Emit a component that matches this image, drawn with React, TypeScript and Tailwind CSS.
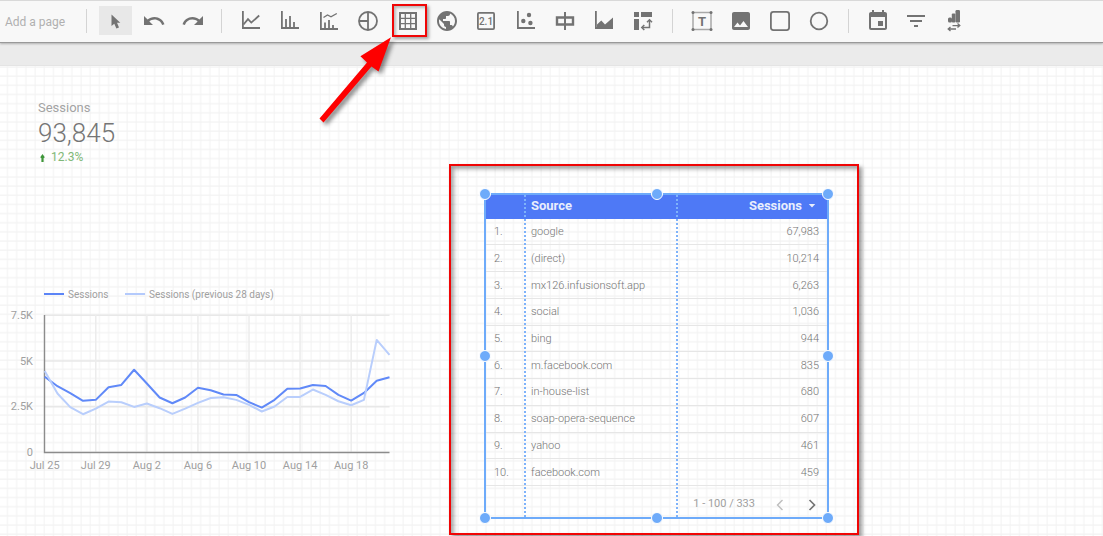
import type { ReactNode } from 'react';
import {
  MdEvent,
  MdFilterList,
  MdImage,
  MdPublic,
  MdRedo,
  MdUndo,
} from 'react-icons/md';

const AXIS = 'M3.9 2V19H21';

const ROWS = [
  { source: 'google', sessions: '67,983' },
  { source: '(direct)', sessions: '10,214' },
  { source: 'mx126.infusionsoft.app', sessions: '6,263' },
  { source: 'social', sessions: '1,036' },
  { source: 'bing', sessions: '944' },
  { source: 'm.facebook.com', sessions: '835' },
  { source: 'in-house-list', sessions: '680' },
  { source: 'soap-opera-sequence', sessions: '607' },
  { source: 'yahoo', sessions: '461' },
  { source: 'facebook.com', sessions: '459' },
];

const CURRENT = [
  4140, 3620, 3240, 2825, 2875, 3565, 3690, 4520, 3770, 3005, 2690, 3005, 3540,
  3400, 3170, 3145, 2750, 2455, 2875, 3485, 3495, 3690, 3635, 3145, 2835, 3255,
  3915, 4110,
];

const PREVIOUS = [
  4455, 3220, 2475, 2090, 2400, 2785, 2745, 2490, 2675, 2420, 2110, 2400, 2710,
  2980, 3020, 2875, 2600, 2240, 2510, 3035, 3035, 3440, 3145, 2800, 2580, 2875,
  6150, 5330,
];

const DAYS = ['Jul 25', 'Jul 29', 'Aug 2', 'Aug 6', 'Aug 10', 'Aug 14', 'Aug 18'];

interface IIcon {
  children: ReactNode;
}

function Icon({ children }: IIcon) {
  return (
    <svg
      viewBox="0 0 24 24"
      className="size-6 shrink-0"
      fill="none"
      stroke="currentColor"
      strokeWidth="1.8"
      aria-hidden="true"
    >
      {children}
    </svg>
  );
}

interface ITool {
  label: string;
  active?: boolean;
  children: ReactNode;
}

function Tool({ label, active = false, children }: ITool) {
  return (
    <button
      type="button"
      aria-label={label}
      className={`flex h-[29px] w-[33px] shrink-0 items-center justify-center text-[#737373] ${
        active ? 'bg-[#e8e8e8]' : ''
      }`}
    >
      {children}
    </button>
  );
}

function Divider() {
  return <div className="mx-3 h-6 w-px shrink-0 bg-[#d4d4d4]" />;
}

/* Red frame and arrow that point at the table tool */
function Callout() {
  return (
    <>
      <span className="pointer-events-none absolute -top-0.5 left-px h-[33px] w-[35px] border-2 border-[#f00505] shadow-[2px_2px_3px_rgba(0,0,0,0.35),inset_2px_2px_3px_rgba(0,0,0,0.25)]" />
      <svg
        viewBox="0 0 80 96"
        className="pointer-events-none absolute top-full right-full z-10 h-24 w-20 drop-shadow-[3px_3px_2px_rgba(0,0,0,0.45)]"
        aria-hidden="true"
      >
        <path
          d="M80 2.3L49.4 21.3L56 27.5L8.5 83.5L12.5 87.5L60.5 31.5L67.5 36.5Z"
          fill="#fe0000"
        />
      </svg>
    </>
  );
}

function Toolbar() {
  return (
    <header className="relative z-10 flex h-[43px] items-center border-t border-b border-t-[#d9d9d9] border-b-[#999] bg-[#f8f8f8] pb-0.5 shadow-[0_1px_2px_rgba(0,0,0,0.25)]">
      <button
        type="button"
        className="w-[74px] shrink-0 pt-0.5 pl-[5px] text-left text-xs whitespace-nowrap text-[#b0b0b0]"
      >
        Add a page
      </button>
      <Divider />

      <div className="flex w-[110px] shrink-0 justify-between">
        <Tool label="Select" active>
          <Icon>
            <path
              d="M7.5 5.5V17L10.3 14.8L12.4 19.5L15 18.4L13 13.8H16.3Z"
              fill="currentColor"
              stroke="none"
            />
          </Icon>
        </Tool>
        <Tool label="Undo">
          <MdUndo size={24} />
        </Tool>
        <Tool label="Redo">
          <MdRedo size={24} />
        </Tool>
      </div>
      <Divider />

      <div className="flex w-[426px] shrink-0 justify-between">
        <Tool label="Time series">
          <Icon>
            <path d={AXIS} />
            <path d="M4.5 15.5L9 10.2L12.3 13.6L20.2 6.5" />
          </Icon>
        </Tool>
        <Tool label="Bar chart">
          <Icon>
            <path d={AXIS} />
            <path d="M8 19V10M12 19V7M16 19V13" />
          </Icon>
        </Tool>
        <Tool label="Combo chart">
          <Icon>
            <path d="M3.9 3V20H21" />
            <path d="M8 20V13.5M12 20V11M16 20V16" />
            <path d="M6.5 8.5L10.5 6L14 7.8L19.8 4.5" strokeWidth="1.4" />
          </Icon>
        </Tool>
        <Tool label="Pie chart">
          <Icon>
            <circle cx="12" cy="12" r="9" />
            <path d="M12 3V21M3 12H12" />
          </Icon>
        </Tool>
        <div className="relative">
          <Tool label="Table">
            <Icon>
              <rect x="4" y="4" width="16" height="16" strokeWidth="2" />
              <path d="M9.3 4V20M14.7 4V20M4 9.3H20M4 14.7H20" strokeWidth="1.3" />
            </Icon>
          </Tool>
          <Callout />
        </div>
        <Tool label="Geo map">
          <MdPublic size={24} />
        </Tool>
        <Tool label="Scorecard">
          <Icon>
            <rect x="3.9" y="3.9" width="16.2" height="16.2" rx="1" />
            <text
              x="12"
              y="15.8"
              fontSize="10"
              fontWeight="500"
              textAnchor="middle"
              fill="currentColor"
              stroke="none"
            >
              2.1
            </text>
          </Icon>
        </Tool>
        <Tool label="Scatter chart">
          <Icon>
            <path d={AXIS} />
            <g fill="currentColor" stroke="none">
              <circle cx="9.3" cy="12" r="2.2" />
              <circle cx="15" cy="6" r="2.2" />
              <circle cx="16.4" cy="14" r="2.2" />
            </g>
          </Icon>
        </Tool>
        <Tool label="Bullet chart">
          <Icon>
            <path d="M12 3V21" strokeWidth="2" />
            <path d="M4 8.5H20V15.5H4Z" strokeWidth="2.4" />
          </Icon>
        </Tool>
        <Tool label="Area chart">
          <Icon>
            <path d={AXIS} />
            <path
              d="M5 18V15.5L9.3 11.5L13 15.5L21 8.5V19.5H5Z"
              fill="currentColor"
              stroke="none"
            />
          </Icon>
        </Tool>
        <Tool label="Pivot table">
          <Icon>
            <path
              d="M3 3H8V8H3ZM10 3H21V8H10ZM3 10H8V21H3Z"
              fill="currentColor"
              stroke="none"
            />
            <path d="M11.5 18.5H18.5V11.5" strokeWidth="1.5" />
            <path d="M16 13.3L18.5 10.8L21 13.3M13.3 16L10.8 18.5L13.3 21" strokeWidth="1.5" />
          </Icon>
        </Tool>
      </div>
      <Divider />

      <div className="flex w-[151px] shrink-0 justify-between">
        <Tool label="Text">
          <Icon>
            <rect x="3" y="3.5" width="18" height="17" strokeWidth="1.5" stroke="#a8a8a8" />
            <g fill="currentColor" stroke="none">
              <circle cx="3" cy="3.5" r="1.5" />
              <circle cx="21" cy="3.5" r="1.5" />
              <circle cx="3" cy="20.5" r="1.5" />
              <circle cx="21" cy="20.5" r="1.5" />
              <text x="12" y="16.5" fontSize="13" fontWeight="700" textAnchor="middle">
                T
              </text>
            </g>
          </Icon>
        </Tool>
        <Tool label="Image">
          <MdImage size={24} />
        </Tool>
        <Tool label="Rectangle">
          <Icon>
            <rect x="2.9" y="2.9" width="18.2" height="18.2" rx="2.5" />
          </Icon>
        </Tool>
        <Tool label="Circle">
          <Icon>
            <circle cx="12" cy="12" r="8.3" />
          </Icon>
        </Tool>
      </div>
      <Divider />

      <div className="flex w-[109px] shrink-0 justify-between">
        <Tool label="Date range">
          <MdEvent size={24} />
        </Tool>
        <Tool label="Filter control">
          <MdFilterList size={24} />
        </Tool>
        <Tool label="Data control">
          <Icon>
            <g fill="currentColor" stroke="none">
              <rect x="13.5" y="1" width="4.5" height="12.5" rx="1.2" />
              <rect x="9.8" y="4.5" width="3.6" height="9" rx="1" />
              <rect x="6" y="8.5" width="4" height="5" rx="1.5" />
            </g>
            <path d="M10.5 16.6H17.5M15.5 14.6L17.8 16.6L15.5 18.6" strokeWidth="1.3" />
            <path d="M14 20H6.5M8.5 18L6.2 20L8.5 22" strokeWidth="1.3" />
          </Icon>
        </Tool>
      </div>
    </header>
  );
}

/* Faint squared paper behind the report */
function CanvasGrid() {
  return (
    <svg className="absolute inset-0 size-full" aria-hidden="true">
      <defs>
        <pattern id="canvas-grid" width="9.2" height="9.16" patternUnits="userSpaceOnUse">
          <path d="M7.5 0V9.16M0 1H9.2" fill="none" stroke="#f2f2f2" strokeWidth="1" />
        </pattern>
      </defs>
      <rect width="100%" height="100%" fill="url(#canvas-grid)" />
    </svg>
  );
}

function Scorecard() {
  return (
    <div className="pt-[34px] pl-[38px]">
      <p className="text-[13px] leading-4 text-[#a3a3a3]">Sessions</p>
      <p className="text-[26px] leading-[34px] font-light text-[#757575]">93,845</p>
      <p className="flex items-center gap-1.5 text-xs leading-[14px] text-[#7fb877]">
        <svg viewBox="0 0 7 10" className="mt-0.5 h-2.5 w-[7px]" aria-hidden="true">
          <path d="M4.5 1L6.8 4.2L5.6 5.2V9H3.4V5.2L2.2 4.2Z" fill="#3f963a" />
        </svg>
        12.3%
      </p>
    </div>
  );
}

const LEFT = 44.7;
const STEP = 12.77;
const BASE = 168.5;
const yOf = (value: number) => BASE - (value / 7500) * 137.3;
const toPoints = (values: number[]) =>
  values.map((value, i) => `${LEFT + i * STEP},${yOf(value)}`).join(' ');

function SessionsChart() {
  return (
    <svg
      viewBox="0 0 400 196"
      className="mt-[120px] h-[196px] w-[400px]"
      fontSize="11"
      fill="#a0a0a0"
      role="img"
      aria-label="Sessions by day"
    >
      <path d="M44 10H64" stroke="#5c85f7" strokeWidth="2" />
      <text x="68" y="14" fontSize="10">
        Sessions
      </text>
      <path d="M125 10H145" stroke="#b4cafc" strokeWidth="2" />
      <text x="149" y="14" fontSize="10">
        Sessions (previous 28 days)
      </text>

      {[7500, 5000, 2500].map((value) => (
        <path key={value} d={`M44 ${yOf(value)}H389.5`} stroke="#e8e8e8" strokeWidth="1.5" />
      ))}
      {DAYS.slice(1).map((day, i) => (
        <path
          key={day}
          d={`M${LEFT + (i + 1) * 4 * STEP} 31V168`}
          stroke="#ececec"
          strokeWidth="1.5"
        />
      ))}

      <g textAnchor="end">
        <text x="33" y="35">7.5K</text>
        <text x="33" y="81">5K</text>
        <text x="33" y="126">2.5K</text>
        <text x="33" y="172">0</text>
      </g>
      <g textAnchor="middle">
        {DAYS.map((day, i) => (
          <text key={day} x={LEFT + i * 4 * STEP} y="185">
            {day}
          </text>
        ))}
      </g>

      <path d="M44.5 31V168.5H389.5" fill="none" stroke="#8c8c8c" strokeWidth="1.4" />
      <g fill="none" strokeWidth="2" strokeLinejoin="round">
        <polyline points={toPoints(CURRENT)} stroke="#6089f8" />
        <polyline points={toPoints(PREVIOUS)} stroke="#b9cefc" />
      </g>
    </svg>
  );
}

const HANDLES = [
  'top-0 left-0',
  'top-0 left-1/2',
  'top-0 left-full',
  'top-1/2 left-0',
  'top-1/2 left-full',
  'top-full left-0',
  'top-full left-1/2',
  'top-full left-full',
];

/* Selection outline with its resize handles and column guides */
function Selection() {
  return (
    <div className="pointer-events-none absolute inset-0">
      <div className="absolute inset-y-0 left-[38px] border-l-2 border-dotted border-[#7fb3fa]" />
      <div className="absolute inset-y-0 left-[190px] border-l-2 border-dotted border-[#7fb3fa]" />
      <div className="absolute -inset-px">
        {HANDLES.map((place) => (
          <span
            key={place}
            className={`absolute size-3 -translate-1/2 rounded-full border border-white bg-[#6eabfa] ${place}`}
          />
        ))}
      </div>
    </div>
  );
}

function SourceTable() {
  return (
    <div className="relative border-2 border-[#6eabfa]">
      <table className="h-[291px] w-full table-fixed text-[11px] leading-4 text-[#757575]">
        <thead>
          <tr className="h-6 bg-[#4e79f6] text-[13px] text-[#e9eefc]">
            <th className="w-[38px] p-0" aria-label="Row" />
            <th className="w-[152px] p-0 pb-0.5 pl-[7px] text-left font-bold">Source</th>
            <th className="p-0 pr-[11px] pb-0.5 text-right font-bold">
              <span className="inline-flex items-center gap-1.5">
                Sessions
                <svg viewBox="0 0 8 4" className="h-1 w-2" aria-hidden="true">
                  <path d="M0.8 0H7.2L4 3.4Z" fill="currentColor" />
                </svg>
              </span>
            </th>
          </tr>
        </thead>
        <tbody className="font-light">
          {ROWS.map((row, i) => (
            <tr key={row.source} className="border-b border-[#e6e6e6]">
              <td className="p-0 pt-px pl-2">{i + 1}.</td>
              <td className="p-0 pt-px pl-[7px]">{row.source}</td>
              <td className="p-0 pt-px pr-2 text-right">{row.sessions}</td>
            </tr>
          ))}
        </tbody>
      </table>

      <div className="flex h-[31px] items-center justify-end pt-1.5 pr-[3px] text-[11px] text-[#a0a0a0]">
        <span className="mr-[13px]">1 - 100 / 333</span>
        <button type="button" aria-label="Previous page" className="mr-2 text-[#bdbdbd]">
          <svg viewBox="0 0 24 24" className="size-6" fill="none" stroke="currentColor" strokeWidth="1.4">
            <path d="M14.5 7L9.5 12L14.5 17" />
          </svg>
        </button>
        <button type="button" aria-label="Next page" className="text-[#757575]">
          <svg viewBox="0 0 24 24" className="size-6" fill="none" stroke="currentColor" strokeWidth="1.7">
            <path d="M9.5 7L14.5 12L9.5 17" />
          </svg>
        </button>
      </div>

      <Selection />
    </div>
  );
}

export default function App() {
  return (
    <div className="flex min-h-screen flex-col overflow-hidden bg-white font-[Roboto,sans-serif]">
      <Toolbar />
      <div className="h-[23px] border-b border-[#e4e4e4] bg-[#ebebeb]" />

      <main className="relative flex flex-1 items-start">
        <CanvasGrid />
        <section className="relative w-[449px] shrink-0">
          <Scorecard />
          <SessionsChart />
        </section>
        <section className="relative mt-[98px] w-[410px] shrink-0 border-2 border-[#f00505] pt-[27px] pr-7 pb-3.5 pl-[33px] shadow-[3px_3px_4px_rgba(0,0,0,0.4),inset_3px_3px_4px_rgba(0,0,0,0.35)]">
          <SourceTable />
        </section>
      </main>
    </div>
  );
}
